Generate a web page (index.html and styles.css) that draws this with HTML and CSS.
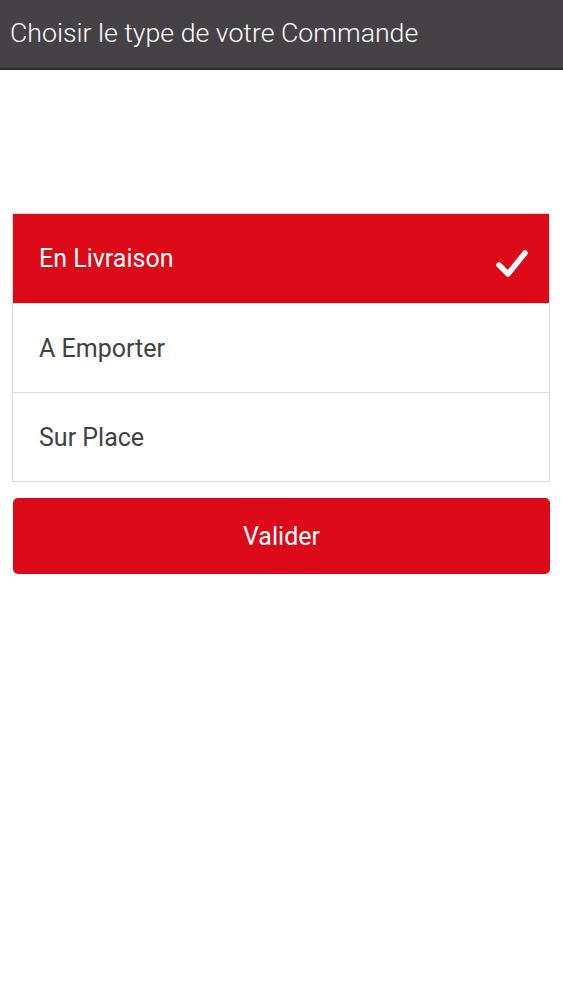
FILE: index.html
```html
<!DOCTYPE html>
<html lang="fr">
<head>
<meta charset="utf-8">
<title>Choisir le type de votre Commande</title>
<link rel="stylesheet" href="styles.css">
</head>
<body>
<header class="appbar">
  <h1 class="appbar-title">Choisir le type de votre Commande</h1>
</header>
<main class="content">
  <ul class="options">
    <li class="option option-selected">
      <span class="option-label">En Livraison</span>
      <svg class="check" width="34" height="30" viewBox="0 0 34 30" aria-hidden="true">
        <path d="M4 16 L13 25 L30 4" fill="none" stroke="#fff" stroke-width="5.5" stroke-linecap="round" stroke-linejoin="round"/>
      </svg>
    </li>
    <li class="option"><span class="option-label">A Emporter</span></li>
    <li class="option"><span class="option-label">Sur Place</span></li>
  </ul>
  <button class="submit" type="button">Valider</button>
</main>
</body>
</html>
```
FILE: styles.css
```css
*, *::before, *::after {
  box-sizing: border-box;
}
html, body {
  margin: 0;
  padding: 0;
  background: #ffffff;
  font-family: Roboto, "Noto Sans", "Liberation Sans", sans-serif;
}
.appbar {
  height: 70px;
  background: #444245;
  border-bottom: 2px solid #2b2a2c;
  display: flex;
  align-items: center;
  padding: 0 10px;
}
.appbar-title {
  margin: 0;
  font-weight: 300;
  font-size: 26.7px;
  color: #ffffff;
  letter-spacing: 0;
  padding-bottom: 3px;
}
.content {
  padding: 143px 13px 0 12px;
}
.options {
  list-style: none;
  margin: 0;
  padding: 0;
  border: 1px solid #dcdcdc;
}
.option {
  height: 89px;
  display: flex;
  align-items: center;
  justify-content: space-between;
  padding: 0 20px 0 26px;
  color: #424242;
  font-size: 25px;
  border-top: 1px solid #dcdcdc;
}
.option:first-child {
  border-top: none;
  height: 89px;
}
.option-selected {
  background: #dc0918;
  color: #ffffff;
}
.check {
  display: block;
  margin-top: 11px;
}
.submit {
  display: block;
  width: calc(100% - 1px);
  margin: 16px 0 0 1px;
  height: 76px;
  border: none;
  border-radius: 5px;
  background: #dc0918;
  color: #ffffff;
  font-family: inherit;
  font-size: 25px;
  padding: 0;
}
```
